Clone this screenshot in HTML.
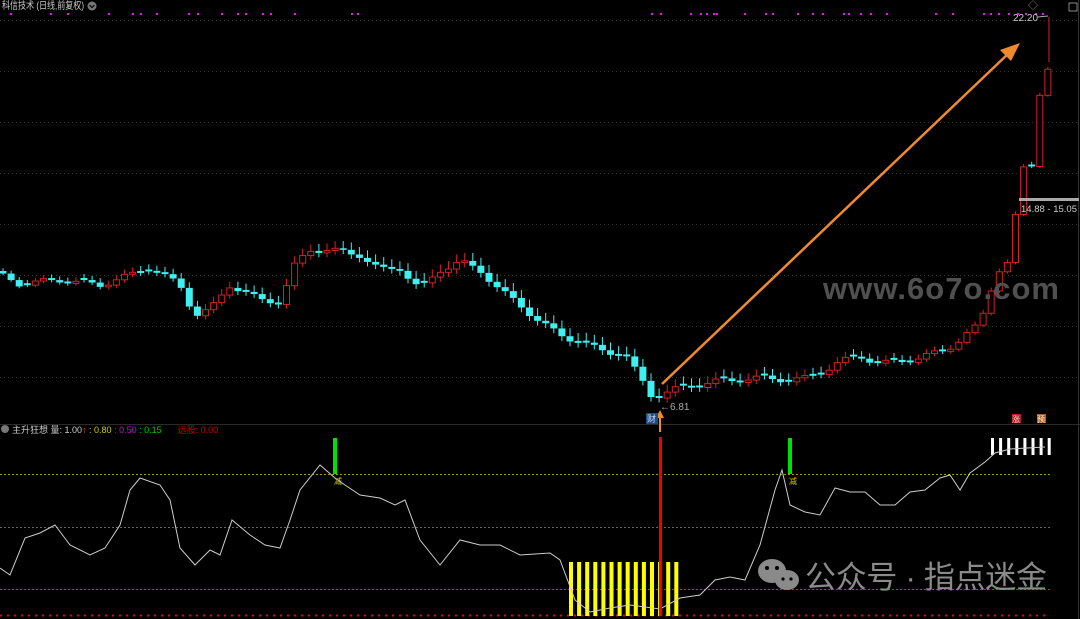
<!DOCTYPE html>
<html><head><meta charset="utf-8"><style>
html,body{margin:0;padding:0;background:#000;width:1080px;height:619px;overflow:hidden}
svg{display:block}
text{font-family:"Liberation Sans","Noto Sans CJK SC",sans-serif}
</style></head><body>
<svg id="s" width="1080" height="619" xmlns="http://www.w3.org/2000/svg">
<g id="grid" stroke="#333" stroke-dasharray="1,3" stroke-width="1"></g>
<line x1="0" y1="424.5" x2="1080" y2="424.5" stroke="#2a2a2a"/>
<line x1="1078.5" y1="0" x2="1078.5" y2="619" stroke="#333"/>
<text x="2" y="9" font-size="10" fill="#ccc" textLength="82" lengthAdjust="spacingAndGlyphs">科信技术 (日线,前复权)</text>
<circle cx="92" cy="6" r="4.5" fill="#777"/><path d="M89.5 5 L92 7.5 L94.5 5" stroke="#000" fill="none" stroke-width="1.2"/>
<g id="dots" fill="#e020e0"></g>
<text x="1028" y="9" font-size="10" fill="#888">◇</text>
<rect x="1069" y="3" width="8" height="8" fill="none" stroke="#888"/>
<g id="candles"></g>
<line x1="1049" y1="17" x2="1049" y2="62" stroke="#d42020"/>
<text x="823" y="299" font-size="31" font-weight="bold" fill="#505050" letter-spacing="1" textLength="237">www.6o7o.com</text>
<line x1="662" y1="384" x2="1010" y2="52" stroke="#f08a30" stroke-width="2.5"/>
<polygon points="1020,43 1000,50 1011,61" fill="#f08a30"/>
<line x1="660" y1="415" x2="660" y2="432" stroke="#f08a30" stroke-width="2"/>
<polygon points="660,410 656,418 664,418" fill="#f08a30"/>
<rect x="646" y="413" width="12" height="11" fill="#1d4b8a"/>
<text x="647" y="422" font-size="9" fill="#cde">财</text>
<text x="660" y="410" font-size="10" fill="#aaa">←6.81</text>
<text x="1013" y="21" font-size="10" fill="#ccc">22.20</text>
<line x1="1038" y1="17" x2="1048" y2="16" stroke="#aaa"/>
<rect x="1019" y="198" width="60" height="3" fill="#aaa"/>
<text x="1021" y="212" font-size="9.5" fill="#ccc">14.88 - 15.05</text>
<rect x="1012" y="414" width="9" height="9" fill="#b02020"/><text x="1012" y="422" font-size="8" fill="#fcc">涨</text>
<rect x="1037" y="414" width="9" height="9" fill="#b06020"/><text x="1037" y="422" font-size="8" fill="#fec">预</text>
<circle cx="5" cy="429" r="4" fill="#777"/>
<text x="12" y="433" font-size="9"><tspan fill="#ccc">主升狂想 量: 1.00</tspan><tspan fill="#f33">↑</tspan><tspan fill="#cc0"> : 0.80</tspan><tspan fill="#c0c"> : 0.50</tspan><tspan fill="#0c0"> : 0.15</tspan><tspan fill="#c00" dx="16">远股: 0.00</tspan></text>
<line x1="0" y1="474.5" x2="1050" y2="474.5" stroke="#a0a000" stroke-dasharray="2,2"/>
<line x1="0" y1="527.5" x2="1050" y2="527.5" stroke="#666" stroke-dasharray="2,2"/>
<line x1="0" y1="589.5" x2="1050" y2="589.5" stroke="#1a8a1a" stroke-dasharray="2,2"/>
<line x1="0" y1="615.5" x2="1050" y2="615.5" stroke="#e00" stroke-dasharray="2,5" stroke-width="2"/>
<g id="ybars" fill="#ffff00"></g>
<g id="wbars" fill="#fff"></g>
<rect x="333" y="438" width="4" height="36" fill="#00e000"/>
<rect x="788" y="438" width="4" height="36" fill="#00e000"/>
<text x="334" y="484" font-size="8" fill="#cc0">减</text>
<text x="789" y="484" font-size="8" fill="#cc0">减</text>
<polyline id="ind" fill="none" stroke="#ccc" stroke-width="1"/>
<rect x="659" y="437" width="3" height="179" fill="#e00"/>
<g fill="#8a8a8a">
<ellipse cx="772" cy="571" rx="14" ry="12"/><ellipse cx="787" cy="580" rx="12" ry="10"/>
<circle cx="767" cy="568" r="2" fill="#000"/><circle cx="777" cy="568" r="2" fill="#000"/>
<circle cx="783" cy="579" r="1.6" fill="#000"/><circle cx="791" cy="579" r="1.6" fill="#000"/>
</g>
<text x="805" y="588" font-size="31" fill="#8a8a8a" textLength="242">公众号 · 指点迷金</text>
</svg>
<script>
(function(){
var NS="http://www.w3.org/2000/svg";
function el(p,t,a){var e=document.createElementNS(NS,t);for(var k in a)e.setAttribute(k,a[k]);document.getElementById(p).appendChild(e);return e;}
[20,71,122,173,224,275,326,377].forEach(function(y){el("grid","line",{x1:0,y1:y+.5,x2:1078,y2:y+.5});});
[10,50,67,108,132,140,156,188,197,221,237,245,262,270,294,351,357,651,660,690,700,706,713,716,744,765,772,797,812,822,843,848,860,870,886,935,952,983,990,998,1008,1017,1025,1035,1042].forEach(function(x){el("dots","rect",{x:x,y:13,width:2,height:2});});
var P=[[0,275],[20,284],[60,280],[100,285],[140,272],[150,268],[180,285],[195,315],[210,310],[230,285],[260,300],[280,302],[295,265],[310,250],[330,250],[360,255],[380,270],[400,268],[420,290],[440,270],[460,262],[480,270],[500,290],[520,305],[540,322],[560,335],[580,342],[600,350],[625,355],[645,385],[653,398],[660,395],[680,388],[720,381],[760,378],[790,380],[810,378],[840,362],[860,356],[880,364],[920,358],[945,350],[960,340],[975,328],[985,310],[995,275],[1003,265],[1010,263],[1017,205],[1025,160],[1033,165],[1041,80],[1049,68]];
function f(x){for(var i=0;i<P.length-1;i++){if(x<=P[i+1][0]){var t=(x-P[i][0])/(P[i+1][0]-P[i][0]);return P[i][1]+t*(P[i+1][1]-P[i][1]);}}return P[P.length-1][1];}
var prev=f(0)-4;
for(var x=3;x<=1049;x+=8.1){
 var c=f(x)+(Math.sin(x*1.7)*3);var o=prev;
 if(Math.abs(c-o)<1.5)o=c-2;
 var up=c<o;var col=up?"#d42020":"#40f0f0";
 var tp=Math.min(o,c),bt=Math.max(o,c);
 var w=Math.abs(Math.sin(x*3.1))*6+2;
 el("candles","line",{x1:x,y1:tp-w,x2:x,y2:bt+w*0.6,stroke:col});
 if(up)el("candles","rect",{x:x-3,y:tp,width:6,height:bt-tp,fill:"#000",stroke:col});
 else el("candles","rect",{x:x-3.5,y:tp,width:7,height:bt-tp,fill:col});
 prev=c;
}
for(var x=569;x<=680;x+=8.1)el("ybars","rect",{x:x,y:562,width:4,height:54});
for(var x=991;x<=1050;x+=8.1)el("wbars","rect",{x:x,y:438,width:3,height:17});
var L=[[0,568],[10,575],[25,538],[40,533],[55,525],[70,545],[90,555],[105,548],[120,525],[130,490],[140,478],[160,485],[170,500],[180,548],[195,565],[210,550],[220,555],[232,520],[250,535],[265,545],[280,548],[290,520],[300,490],[320,465],[335,478],[345,485],[360,495],[380,498],[395,505],[405,500],[420,540],[440,565],[460,540],[480,545],[500,545],[520,555],[550,553],[560,560],[575,600],[590,612],[610,608],[630,605],[660,609],[680,598],[700,595],[715,580],[730,577],[745,580],[760,545],[775,490],[782,470],[790,505],[805,512],[820,515],[835,488],[850,492],[865,492],[880,505],[895,505],[910,492],[925,490],[940,478],[950,475],[960,490],[970,473],[985,462],[995,453],[1010,449],[1045,447]];
document.getElementById("ind").setAttribute("points",L.map(function(p){return p.join(",");}).join(" "));
})();
</script>
</body></html>
